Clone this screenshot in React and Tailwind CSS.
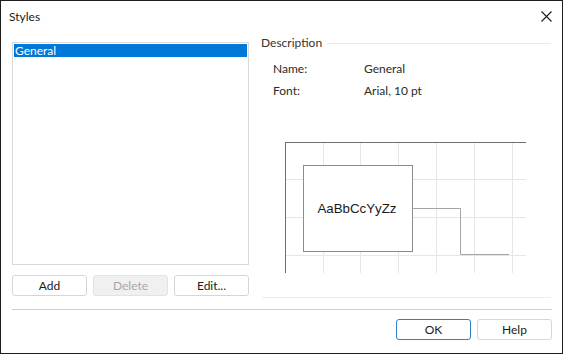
import React from 'react';

function Button({ children, disabled, primary }) {
  return (
    <div
      className={
        'h-[21px] flex items-center justify-center rounded-[3px] border text-[12px] ' +
        (disabled
          ? 'bg-[#f0f0f0] border-[#e3e3e3] text-[#a8a8a8]'
          : primary
          ? 'bg-white border-[#2f80c8] text-[#1b1b1b]'
          : 'bg-white border-[#d6d6d6] text-[#1b1b1b]')
      }
    >
      {children}
    </div>
  );
}

function Preview() {
  const vx = [38, 75, 113, 151, 189, 227];
  const hy = [37, 75, 113];
  return (
    <svg width="241" height="131" viewBox="0 0 241 131" className="block">
      {vx.map((x) => (
        <line key={'v' + x} x1={x + 0.5} y1="0" x2={x + 0.5} y2="131" stroke="#e6e6e6" />
      ))}
      {hy.map((y) => (
        <line key={'h' + y} x1="0" y1={y + 0.5} x2="241" y2={y + 0.5} stroke="#e6e6e6" />
      ))}
      <line x1="0" y1="0.5" x2="241" y2="0.5" stroke="#6f6f6f" />
      <line x1="0.5" y1="0" x2="0.5" y2="131" stroke="#6f6f6f" />
      <rect x="18.5" y="23.5" width="109" height="86" fill="#fff" stroke="#8c8c90" />
      <polyline
        points="127.5,66.5 175.5,66.5 175.5,112.5 224,112.5"
        fill="none"
        stroke="#a4a4aa"
      />
      <text
        x="72"
        y="71"
        textAnchor="middle"
        fontFamily="'Liberation Sans', Arial, sans-serif"
        fontSize="13.3"
        fill="#1a1a1a"
      >
        AaBbCcYyZz
      </text>
    </svg>
  );
}

export default function App() {
  return (
    <div
      className="w-[563px] h-[354px] bg-white border border-[#1e1e1e] flex flex-col text-[12px] leading-[14px] text-[#2b2b2b]"
      style={{ fontFamily: "'Segoe UI', Lato, sans-serif" }}
    >
      <div className="h-[31px] flex items-center justify-between pl-2 pr-[10px]">
        <span className="text-[#1b1b1b]">Styles</span>
        <svg width="11" height="11" viewBox="0 0 11 11">
          <path d="M0.5 0.5L10.5 10.5M10.5 0.5L0.5 10.5" stroke="#1b1b1b" strokeWidth="1.1" />
        </svg>
      </div>

      <div className="flex px-[11px] mt-[10px]">
        <div className="w-[237px] flex flex-col">
          <div className="h-[223px] border border-[#d9d9d9] p-[1px]">
            <div className="h-[13px] bg-[#0078d7] text-white leading-[13px] pl-[1px]">General</div>
          </div>
          <div className="grid grid-cols-3 gap-[6px] mt-[10px]">
            <Button>Add</Button>
            <Button disabled>Delete</Button>
            <Button>Edit...</Button>
          </div>
        </div>

        <div className="flex-1 ml-[12px] flex flex-col">
          <div className="flex items-center h-[2px]">
            <span className="text-[#333]">Description</span>
            <div className="flex-1 h-px bg-[#ebebeb] ml-[5px]" />
          </div>
          <div className="flex mt-[18px] pl-[12px] h-[14px] items-center">
            <span className="w-[91px]">Name:</span>
            <span>General</span>
          </div>
          <div className="flex mt-[8px] pl-[12px] h-[14px] items-center">
            <span className="w-[91px]">Font:</span>
            <span>Arial, 10 pt</span>
          </div>
          <div className="mt-[44px] ml-[24px]">
            <Preview />
          </div>
          <div className="h-px bg-[#ededed] mt-[24px] ml-[1px]" />
        </div>
      </div>

      <div className="h-px bg-[#cfcfcf] ml-[11px] mr-[10px] mt-[11px]" />

      <div className="flex justify-end gap-[6px] mt-[9px] pr-[10px]">
        <div className="w-[75px]">
          <Button primary>OK</Button>
        </div>
        <div className="w-[75px]">
          <Button>Help</Button>
        </div>
      </div>
    </div>
  );
}
